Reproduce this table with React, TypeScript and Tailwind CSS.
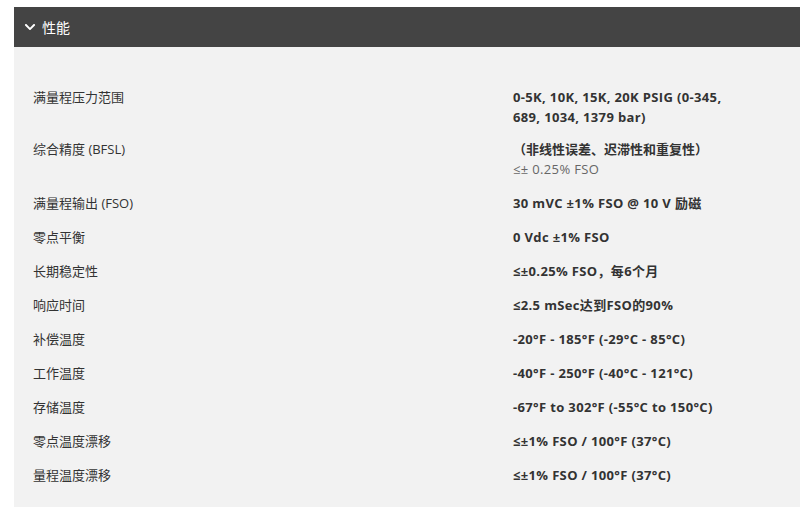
import { FaChevronDown } from "react-icons/fa"

const rows: { label: string; value: React.ReactNode }[] = [
  { label: "满量程压力范围", value: <b className="font-bold">0-5K, 10K, 15K, 20K PSIG (0-345,<br />689, 1034, 1379 bar)</b> },
  {
    label: "综合精度 (BFSL)",
    value: (
      <>
        <b className="font-semibold tracking-normal">（非线性误差、迟滞性和重复性）</b>
        <br />
        <span className="text-[#666]">≤± 0.25% FSO</span>
      </>
    ),
  },
  { label: "满量程输出 (FSO)", value: <b className="font-bold">30 mVC ±1% FSO @ 10 V 励磁</b> },
  { label: "零点平衡", value: <b className="font-bold">0 Vdc ±1% FSO</b> },
  { label: "长期稳定性", value: <b className="font-bold">≤±0.25% FSO，每6个月</b> },
  { label: "响应时间", value: <b className="font-bold">≤2.5 mSec达到FSO的90%</b> },
  { label: "补偿温度", value: <b className="font-bold">-20°F - 185°F (-29°C - 85°C)</b> },
  { label: "工作温度", value: <b className="font-bold">-40°F - 250°F (-40°C - 121°C)</b> },
  { label: "存储温度", value: <b className="font-bold">-67°F to 302°F (-55°C to 150°C)</b> },
  { label: "零点温度漂移", value: <b className="font-bold">≤±1% FSO / 100°F (37°C)</b> },
  { label: "量程温度漂移", value: <b className="font-bold">≤±1% FSO / 100°F (37°C)</b> },
]

export default function App() {
  return (
    <div
      className="w-[800px] h-[507px] overflow-hidden bg-white pt-[7px] pl-[14px]"
      style={{ fontFamily: '"Open Sans", "Noto Sans CJK SC", sans-serif' }}
    >
      <div className="h-[40px] bg-[#444444] flex items-center pl-[10px] gap-[6px] text-white text-[14px]">
        <FaChevronDown className="w-[12px] h-[12px]" />
        <span>性能</span>
      </div>
      <div className="bg-[#f2f2f2] h-[460px] pt-[40px] text-[13px] leading-[20px] text-[#333]">
        {rows.map((row, i) => (
          <div key={i} className={`flex ${i === 0 ? "pb-[12px]" : "pb-[14px]"}`}>
            <div className="w-[499px] pl-[19px]">{row.label}</div>
            <div className="tracking-[0.35px]">{row.value}</div>
          </div>
        ))}
      </div>
    </div>
  )
}
